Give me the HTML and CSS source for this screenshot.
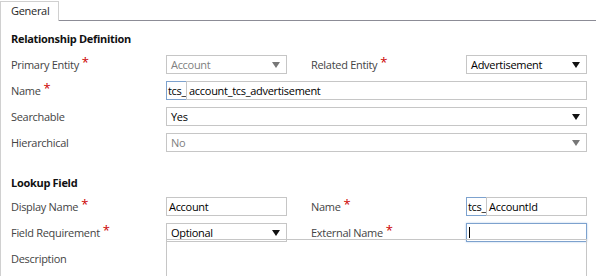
FILE: index.html
```html
<!DOCTYPE html>
<html lang="en">
  <head>
    <meta charset="UTF-8" />
    <title>Relationship</title>
    <link rel="stylesheet" href="styles.css">
  </head>
  <body>
    <div class="tabs">
      <div class="tab">General</div>
      <div class="tab-rest"></div>
    </div>

    <div class="panel">
      <h2>Relationship Definition</h2>
      <div class="form-grid">
        <label>Primary Entity<span class="req">*</span></label>
        <div class="select disabled small">Account<span class="arrow"></span></div>
        <label>Related Entity<span class="req">*</span></label>
        <div class="select small">Advertisement<span class="arrow"></span></div>

        <label>Name<span class="req">*</span></label>
        <div class="prefixed wide">
          <span class="prefix">tcs_</span>
          <span class="input">account_tcs_advertisement</span>
        </div>

        <label>Searchable</label>
        <div class="select wide">Yes<span class="arrow"></span></div>

        <label>Hierarchical</label>
        <div class="select disabled wide">No<span class="arrow"></span></div>
      </div>

      <h2 class="second">Lookup Field</h2>
      <div class="form-grid">
        <label>Display Name<span class="req">*</span></label>
        <div class="input small">Account</div>
        <label>Name<span class="req">*</span></label>
        <div class="prefixed small">
          <span class="prefix">tcs_</span>
          <span class="input">AccountId</span>
        </div>

        <label>Field Requirement<span class="req">*</span></label>
        <div class="select small">Optional<span class="arrow"></span></div>
        <label>External Name<span class="req">*</span></label>
        <div class="input small focused"><span class="caret"></span></div>

        <label>Description</label>
        <div class="textarea wide"></div>
      </div>
    </div>
  </body>
</html>
```

FILE: styles.css
```css
* {
  margin: 0;
  padding: 0;
  box-sizing: border-box;
}

body {
  font-family: "Segoe UI", "Open Sans", sans-serif;
  font-size: 11px;
  letter-spacing: -0.3px;
  color: #444;
  background: #fff;
  overflow: hidden;
}

/* tab strip */
.tabs {
  display: flex;
  height: 21px;
  padding-top: 1px;
}

.tab {
  width: 59px;
  border: 1px solid #d0d0d0;
  border-bottom: none;
  padding-left: 10px;
  line-height: 17px;
  color: #262626;
}

.tab-rest {
  flex: 1;
  border-bottom: 1px solid #8c8c96;
}

.panel {
  border-left: 1px solid #d0d0d0;
  padding: 10px 0 0 10px;
  height: 255px;
}

h2 {
  font-size: 11px;
  font-weight: bold;
  color: #111;
  line-height: 16px;
  margin-bottom: 8px;
}

h2.second {
  margin-top: 23px;
  margin-bottom: 6px;
}

.form-grid {
  display: grid;
  grid-template-columns: 155px 145px 155px 121px;
  grid-auto-rows: 19px;
  row-gap: 7px;
  align-items: center;
}

label {
  color: #444;
  line-height: 19px;
  white-space: nowrap;
}

.req {
  color: #c00;
  font-size: 13px;
  position: relative;
  top: -2px;
  margin-left: 3px;
}

.small {
  width: 121px;
}

.wide {
  grid-column: 2 / 5;
}

.select,
.input,
.textarea {
  height: 19px;
  border: 1px solid #c6c6c6;
  color: #000;
  line-height: 17px;
  padding-left: 2px;
  position: relative;
  white-space: nowrap;
  overflow: hidden;
}

.select {
  padding-left: 4px;
}

.select.disabled {
  color: #808080;
}

.arrow {
  position: absolute;
  right: 6px;
  top: 6px;
  width: 0;
  height: 0;
  border-left: 4px solid transparent;
  border-right: 4px solid transparent;
  border-top: 6px solid #111;
}

.disabled .arrow {
  border-top-color: #777;
}

.prefixed {
  display: flex;
  height: 19px;
}

.prefix {
  border: 1px solid #7da2ce;
  border-right: none;
  color: #000;
  line-height: 17px;
  padding-left: 1px;
  white-space: nowrap;
}

.prefixed .input {
  flex: 1;
  padding-left: 2px;
}

.focused {
  border-color: #7da2ce;
  box-shadow: 0 0 2px #b5cdea;
}

.caret {
  position: absolute;
  left: 2px;
  top: 3px;
  width: 1px;
  height: 11px;
  background: #000;
}

.textarea {
  height: 40px;
}
```
